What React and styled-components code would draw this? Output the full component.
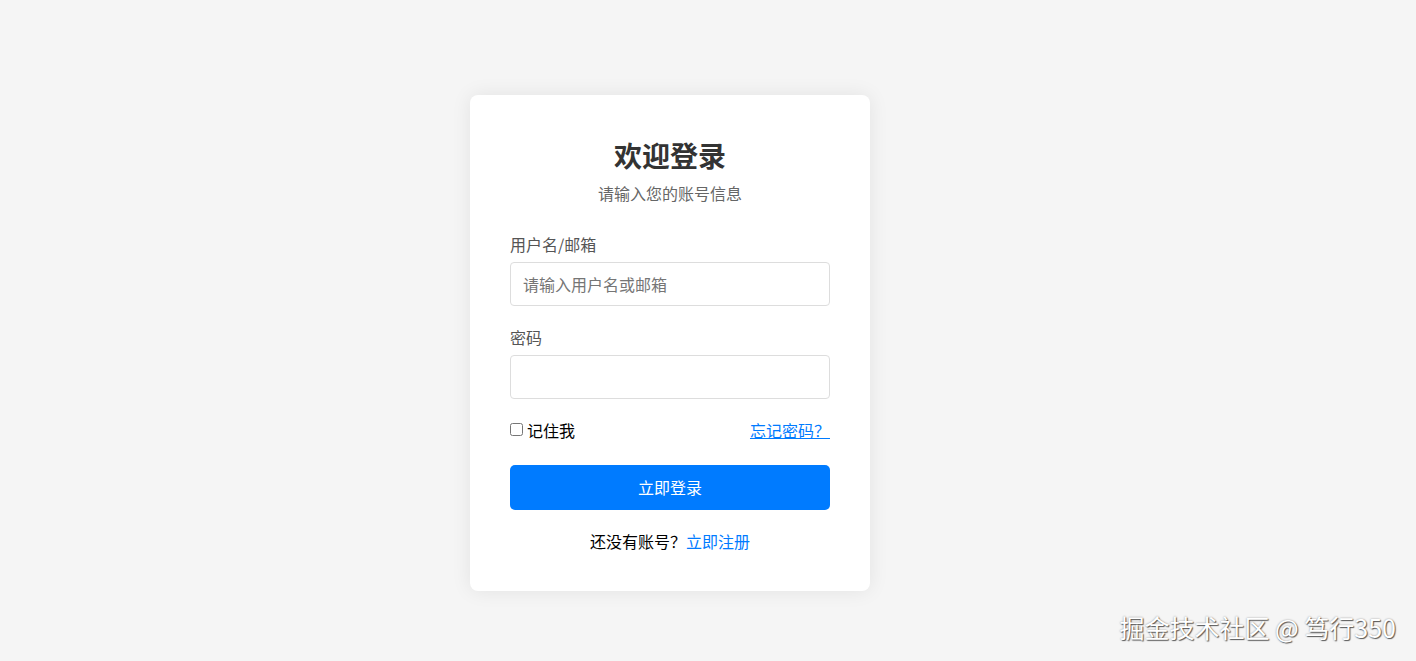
import React, { useState } from 'react';
import styled, { createGlobalStyle } from 'styled-components';

const GlobalStyle = createGlobalStyle`
  html, body {
    margin: 0;
    padding: 0;
    background: #f5f5f5;
    font-family: "Noto Sans CJK SC", "Noto Sans", sans-serif;
  }
  * {
    box-sizing: border-box;
  }
`;

function App() {
  const [username, setUsername] = useState('');
  const [password, setPassword] = useState('');
  const [remember, setRemember] = useState(false);

  const handleSubmit = (e) => {
    e.preventDefault();
  };

  return (
    <Page>
      <GlobalStyle />
      <Card>
        <Header>
          <Title>欢迎登录</Title>
          <Subtitle>请输入您的账号信息</Subtitle>
        </Header>

        <form onSubmit={handleSubmit}>
          <FormGroup>
            <Label htmlFor="username">用户名/邮箱</Label>
            <Input
              id="username"
              type="text"
              placeholder="请输入用户名或邮箱"
              value={username}
              onChange={(e) => setUsername(e.target.value)}
            />
          </FormGroup>

          <FormGroup>
            <Label htmlFor="password">密码</Label>
            <Input
              id="password"
              type="password"
              value={password}
              onChange={(e) => setPassword(e.target.value)}
            />
          </FormGroup>

          <OptionsRow>
            <Remember>
              <input
                type="checkbox"
                checked={remember}
                onChange={(e) => setRemember(e.target.checked)}
              />
              记住我
            </Remember>
            <ForgotLink href="#">忘记密码？</ForgotLink>
          </OptionsRow>

          <SubmitButton type="submit">立即登录</SubmitButton>
        </form>

        <Footer>
          还没有账号？<RegisterLink href="#">立即注册</RegisterLink>
        </Footer>
      </Card>

      <Watermark>掘金技术社区 @ 笃行350</Watermark>
    </Page>
  );
}

const Page = styled.div`
  position: relative;
  min-height: 100vh;
  display: flex;
  justify-content: center;
  align-items: center;
  padding: 24px 76px 0 0;
`;

const Card = styled.div`
  width: 400px;
  background: #fff;
  border-radius: 8px;
  padding: 40px;
  box-shadow: 0 0 20px rgba(0, 0, 0, 0.08);
`;

const Header = styled.div`
  text-align: center;
  margin-bottom: 31px;
`;

const Title = styled.h2`
  margin: 0;
  font-size: 28px;
  line-height: 40px;
  font-weight: 700;
  color: #333;
`;

const Subtitle = styled.p`
  margin: 8px 0 0;
  font-size: 16px;
  line-height: 20px;
  color: #666;
`;

const FormGroup = styled.div`
  margin-bottom: 21px;
`;

const Label = styled.label`
  display: block;
  margin-bottom: 8px;
  font-size: 16px;
  line-height: 20px;
  color: #555;
`;

const Input = styled.input`
  display: block;
  width: 100%;
  height: 44px;
  padding: 0 12px;
  border: 1px solid #ddd;
  border-radius: 4px;
  font-family: inherit;
  font-size: 16px;
  color: #333;
  outline: none;

  &::placeholder {
    color: #757575;
  }
`;

const OptionsRow = styled.div`
  display: flex;
  justify-content: space-between;
  align-items: center;
  height: 20px;
  margin-bottom: 25px;
  font-size: 16px;
`;

const Remember = styled.label`
  display: flex;
  align-items: center;
  gap: 4px;
  color: #000;

  input {
    margin: 0;
    width: 13px;
    height: 13px;
  }
`;

const ForgotLink = styled.a`
  color: #007bff;
  text-decoration: underline;
`;

const SubmitButton = styled.button`
  display: block;
  width: 100%;
  height: 45px;
  border: none;
  border-radius: 5px;
  background: #007bff;
  color: #fff;
  font-family: inherit;
  font-size: 16px;
  cursor: pointer;
`;

const Footer = styled.p`
  margin: 21px 0 0;
  text-align: center;
  font-size: 16px;
  line-height: 20px;
  color: #000;
`;

const RegisterLink = styled.a`
  color: #007bff;
  text-decoration: none;
`;

const Watermark = styled.div`
  position: absolute;
  right: 20px;
  bottom: 20px;
  font-size: 25px;
  line-height: 28px;
  color: #fff;
  text-shadow: 1px 1px 1px rgba(0, 0, 0, 0.6), 0 0 2px rgba(0, 0, 0, 0.4);
`;

export default App;
